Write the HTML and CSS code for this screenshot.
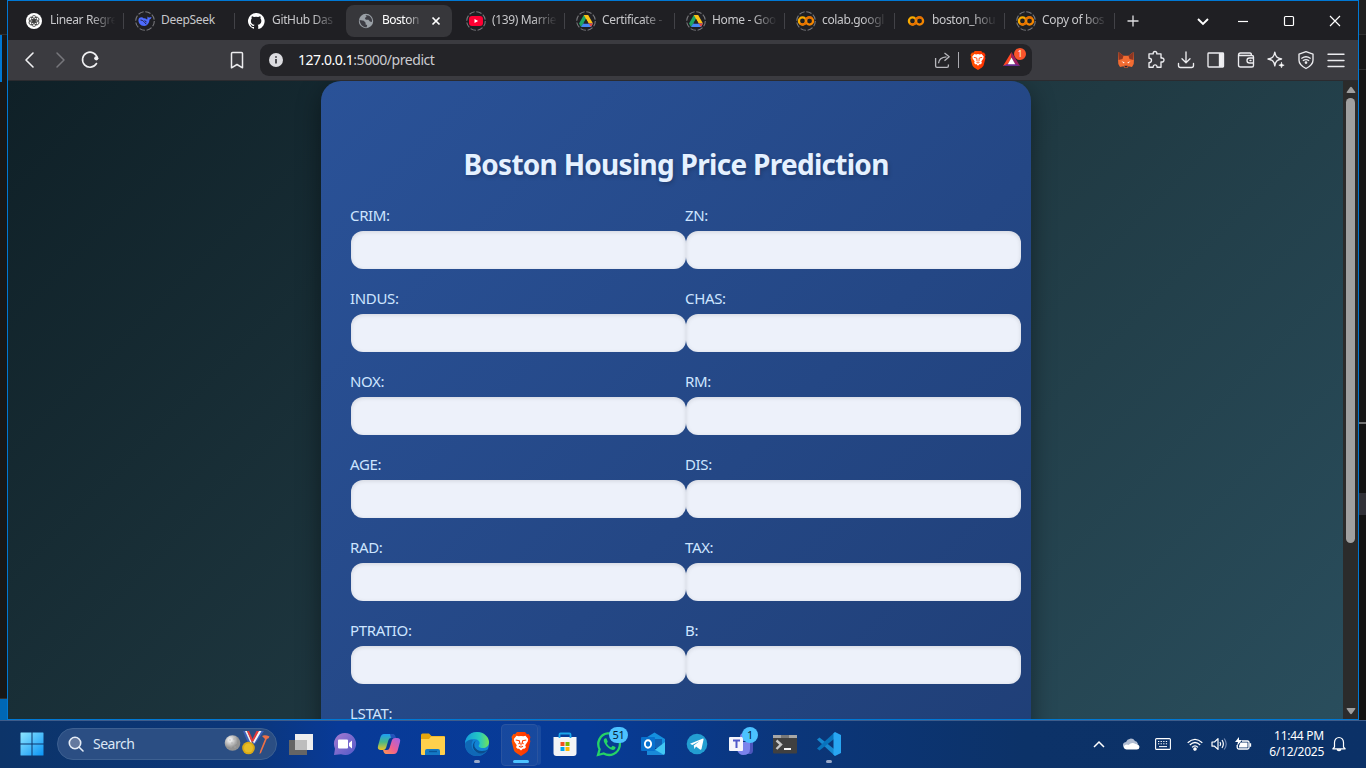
FILE: index.html
```html
<!DOCTYPE html>
<html lang="en">
<head>
<meta charset="utf-8">
<title>Boston Housing Price Prediction</title>
<link rel="stylesheet" href="styles.css">
</head>
<body>
<svg width="0" height="0" class="defs">
  <defs>
    <symbol id="ring" viewBox="0 0 20 20"><circle cx="10" cy="10" r="9.3" fill="none" stroke="#77777b" stroke-width="1.1" stroke-dasharray="5.6 1.7"/></symbol>
    <symbol id="drive" viewBox="0 0 20 20"><path d="M7.8 4h4.4L7 13.2 5 16l-2-3.5z" fill="#1fa463"/><path d="M7.8 4h4.4L17 12.5h-4.4z" fill="#fbc116"/><path d="M5 16l2.2-3.5H17L15 16z" fill="#4688f4"/><path d="M12.6 12.5H17L15 16z" fill="#ea4335"/><path d="M10 8l2.6 4.5H7.4z" fill="#222227"/></symbol>
    <symbol id="colab" viewBox="0 0 20 20"><circle cx="6.5" cy="10" r="3.6" fill="none" stroke="#f9ab00" stroke-width="2.3"/><circle cx="13.5" cy="10" r="3.6" fill="none" stroke="#f28500" stroke-width="2.3"/><path d="M10 8.7A3.6 3.6 0 0 1 16 7.4M10 11.2a3.6 3.6 0 0 1-6 1.2" fill="none" stroke="#e86f00" stroke-width="2.1"/></symbol>
    <linearGradient id="braveFill" x1="0" x2="1"><stop offset="0" stop-color="#ff5500"/><stop offset="1" stop-color="#ff2e00"/></linearGradient>
    <symbol id="brave" viewBox="0 0 20 24"><path d="M6 0h8l2 2.3 1.6-.3L19.5 5l-.7 2.2.6 2-2.2 8.6c-.5 1.5-1 2-2.2 2.9L10 24l-5-3.3c-1.200-.9-1.700-1.400-2.200-2.900L.6 9.200l.6-2L.5 5 2.400 2 4 2.300z" fill="url(#braveFill)"/><path d="M5.500 3.800l2.200.5 2.300-.4 2.300.4 2.200-.5 2.700 3.300-.5 2.500-2.500 3.700.8 2-2 1.700-.8-.6-2.200 2.200-2.200-2.200-.8.6-2-1.700.8-2-2.500-3.700-.5-2.500z" fill="#fff"/><path d="M4.700 8l3.600.8.5 2-1.300 1.200M15.300 8l-3.600.8-.5 2 1.300 1.200M10 11v2.500M8 14.200l2 1 2-1" fill="none" stroke="#ff4000" stroke-width="1.1"/></symbol>
  </defs>
</svg>

<div class="desktop">
  <div class="work">
    <div class="edge-left"><i class="el-a"></i><i class="el-b"></i><i class="el-c"></i><i class="el-d"></i></div>
    <main class="browser">
      <div class="tabs">
        <div class="tab first"><svg class="fav" viewBox="0 0 20 20"><circle cx="10" cy="10" r="8" fill="#fff"/><g fill="none" stroke="#333" stroke-width=".8"><ellipse cx="10" cy="7.700" rx="2.400" ry="3.200"/><ellipse cx="10" cy="7.700" rx="2.400" ry="3.200" transform="rotate(60 10 10)"/><ellipse cx="10" cy="7.700" rx="2.400" ry="3.200" transform="rotate(120 10 10)"/><ellipse cx="10" cy="7.700" rx="2.400" ry="3.200" transform="rotate(180 10 10)"/><ellipse cx="10" cy="7.700" rx="2.400" ry="3.200" transform="rotate(240 10 10)"/><ellipse cx="10" cy="7.700" rx="2.400" ry="3.200" transform="rotate(300 10 10)"/></g></svg><span class="tab-name">Linear Regre</span></div>
        <div class="tab first"><svg class="fav" viewBox="0 0 20 20"><use href="#ring"/><path d="M3.500 8.500C4 6 7 5.500 9 7.500c1.500-.8 2 1 3.200 1 .5-1-.2-2.200.6-3 .4.900 1 1.200 1.600.900.700-.200 1.300-.3 2.100-.4-.2 1.600-1 2.300-2 2.600C14.300 12 12.500 15 9.200 15 5.500 15 3 12 3.500 8.500z" fill="#4d6bfe"/><path d="M5.500 9c2.500-.2 4 2.500 5.800 4.200M9.500 9.700l2 1.200" stroke="#222247" fill="none" stroke-width="1"/></svg><span class="tab-name full">DeepSeek</span></div>
        <div class="tab nosep"><svg class="fav" viewBox="-1 -1 18 18"><path fill="#fff" d="M8 .8a7.300 7.300 0 0 0-2.300 14.200c.4.100.5-.2.500-.4v-1.300c-2 .4-2.500-.9-2.500-.9-.3-.8-.8-1-.8-1-.7-.5.100-.5.100-.5.700.1 1.100.8 1.100.8.700 1.100 1.700.8 2.100.6.100-.5.300-.8.500-1-1.600-.2-3.300-.8-3.300-3.600 0-.8.300-1.500.8-2-.1-.2-.4-.9.100-2 0 0 .6-.2 2 .8a6.900 6.900 0 0 1 3.600 0c1.400-1 2-.8 2-.8.4 1.100.2 1.800.1 2 .5.500.8 1.200.8 2 0 2.800-1.700 3.400-3.300 3.600.3.200.5.700.5 1.400v2c0 .200.100.5.500.4A7.300 7.300 0 0 0 8 .8z"/></svg><span class="tab-name">GitHub Das</span></div>
        <div class="tab nosep active"><div class="pill"><svg class="fav" viewBox="0 0 20 20"><circle cx="10" cy="10" r="7.200" fill="#9aa0a6"/><path d="M9.500 4.200c2 .300 3.500-.2 4.800 1.500 1.500 1.600 2 3.500 1.600 5.300l-2-.4-1.500-1.900H9.800l-1-1.800 1.800-1.200z M3.600 9l4.200.8 1.800 2v1.800l1.600.5-.6 2.400C6.500 16.200 3.800 13 3.600 9z" fill="#3d3d44"/></svg><span class="tab-name">Boston</span><svg class="close" viewBox="0 0 10 10"><path d="M1.500 1.500l7 7M8.500 1.500l-7 7" stroke="#fff" stroke-width="1.700"/></svg></div></div>
        <div class="tab"><svg class="fav" viewBox="0 0 20 20"><use href="#ring"/><rect x="3" y="5" width="14" height="10" rx="3" fill="#ff0033"/><path d="M8.500 7.900v4.200l3.600-2.100z" fill="#fff"/></svg><span class="tab-name">(139) Marrie</span></div>
        <div class="tab"><svg class="fav" viewBox="0 0 20 20"><use href="#ring"/><use href="#drive"/></svg><span class="tab-name">Certificate -</span></div>
        <div class="tab"><svg class="fav" viewBox="0 0 20 20"><use href="#ring"/><use href="#drive"/></svg><span class="tab-name">Home - Goo</span></div>
        <div class="tab"><svg class="fav" viewBox="0 0 20 20"><use href="#ring"/><use href="#colab"/></svg><span class="tab-name">colab.googl</span></div>
        <div class="tab"><svg class="fav" viewBox="0 0 20 20"><use href="#colab"/></svg><span class="tab-name">boston_hou</span></div>
        <div class="tab"><svg class="fav" viewBox="0 0 20 20"><use href="#ring"/><use href="#colab"/></svg><span class="tab-name">Copy of bos</span></div>
        <svg class="newtab" viewBox="0 0 12 12"><path d="M6 .5v11M.5 6h11" stroke="#e0e0e2" stroke-width="1.300"/></svg>
        <svg class="winctl" viewBox="0 0 150 20" fill="none" stroke="#fff" stroke-width="1.200"><path d="M6 8l5 5 5-5" stroke-width="1.900"/><path d="M46 10.500h10"/><rect x="92.500" y="5.500" width="9" height="9" rx="1"/><path d="M138 5l10 10M148 5l-10 10"/></svg>
      </div>
      <div class="toolbar">
        <svg class="nav" viewBox="0 0 80 20" fill="none" stroke-linecap="round" stroke-linejoin="round"><path d="M13 3L6 10l7 7" stroke="#f0f0f2" stroke-width="1.600"/><path d="M37 3l7 7-7 7" stroke="#77777c" stroke-width="1.500"/><path d="M76.500 13.500a7.500 7.500 0 1 1 .9-5.200" stroke="#f0f0f2" stroke-width="1.600"/><circle cx="76.300" cy="8.300" r="2.100" fill="#f0f0f2"/></svg>
        <svg class="bookmark" viewBox="0 0 20 20"><path d="M4.500 3.600c0-.7.400-1.100 1.100-1.100h8.800c.7 0 1.100.4 1.100 1.100v14.200L10 14.500l-5.500 3.300z" fill="none" stroke="#ececee" stroke-width="1.500" stroke-linejoin="round"/></svg>
        <div class="url">
          <svg class="info" viewBox="0 0 14 14"><circle cx="7" cy="7" r="7" fill="#dcdce0"/><path d="M7 6v4.500M7 3.200v1.500" stroke="#35353a" stroke-width="1.700"/></svg>
          <span class="address"><b>127.0.0.1</b>:5000/predict</span>
          <svg class="share" viewBox="0 0 20 20" fill="none" stroke="#b9b9be" stroke-width="1.300" stroke-linejoin="round"><path d="M2.600 8v8q0 1.400 1.400 1.400h10q1.400 0 1.400-1.400v-1.500"/><path d="M5.500 13.300c.3-4 3-6.200 8-6.500M11.500 3l4.700 3.800-4.700 3.900"/></svg>
          <i class="bar"></i>
          <svg class="lion" viewBox="0 0 20 24"><use href="#brave"/></svg>
          <div class="rewards"><svg viewBox="0 0 20 18"><path d="M10 1L1 16l5-1.700L10 7z" fill="#ff4724"/><path d="M10 1l9 15-5-1.700L10 7z" fill="#9e1f63"/><path d="M1 16l5-2.500h8l5 2.500z" fill="#662d91"/><path d="M10 7l4 7H6z" fill="#fff"/></svg><em>1</em></div>
        </div>
        <div class="tools">
          <svg viewBox="0 0 20 20"><path d="M2.500 2l5 3.800h5L17.500 2l.5 7-.3 5-1.700 3-3.500-.8-1 1.600h-3l-1-1.600-3.500.8-1.700-3L2 9z" fill="#f26b31"/><path d="M2.500 2l5 3.800L6.500 9 2.500 10zM17.500 2l-5 3.800 1 3.200 4 1z" fill="#8c3622"/><path d="M5.500 11.300l3 .9-.5 1.300zM14.500 11.300l-3 .9.500 1.300z" fill="#fff"/><path d="M8.200 15.800h3.600l-.8 1.500H9z" fill="#282432"/></svg>
          <svg viewBox="0 0 20 20" class="ln"><path d="M3 3.800h4.300c-.5-2 .7-2.300 1.700-2.300s2.200.3 1.700 2.300H15v4.300c2-.5 3 .5 3 1.900s-1 2.400-3 1.900v5.300h-4c.1-1.700-.8-2.400-1.900-2.400s-2 .7-1.900 2.400H3v-4.500c2 0 2.500-1 2.500-2.400S4.800 8.200 3 8.200z"/></svg>
          <svg viewBox="0 0 20 20" class="ln"><path d="M10 2v10.500M6 8.800l4 4 4-4M2.500 13.500v2q0 2 2 2h11q2 0 2-2v-2"/></svg>
          <svg viewBox="0 0 20 20" class="ln"><rect x="2" y="3" width="15.500" height="14" rx=".8"/><path d="M13.500 3.700v12.600h3.200V3.700z" fill="#f1f1f3"/></svg>
          <svg viewBox="0 0 20 20" class="ln"><path d="M2.500 5.500q0-2.500 2-2.500h9.500q1.500 0 1.500 2.500M2.500 5.500H16q1.500 0 1.500 1.500v8.500q0 1.500-1.500 1.500H4.500q-2 0-2-2zM17.500 8h-4q-2.500 0-2.500 2.500t2.500 2.500h4M14 10.500h1"/></svg>
          <svg viewBox="0 0 20 20" class="ln"><path d="M8.800 2.200c.7 4.500 2.300 6 6.800 6.800-4.500.8-6.100 2.300-6.800 6.800C8.100 11.300 6.500 9.800 2 9c4.500-.8 6.100-2.300 6.800-6.800z"/><path d="M15.500 12.500c.3 1.800.8 2.200 2.700 2.700-1.900.5-2.400.9-2.700 2.700-.3-1.800-.8-2.200-2.700-2.700 1.900-.5 2.400-.9 2.700-2.700z" fill="#fff" stroke-width=".6"/></svg>
          <svg viewBox="0 0 20 20" class="ln"><path d="M10 1.700l7 2.400v6.200c0 3.500-3 6.200-7 8.200-4-2-7-4.700-7-8.200V4.100z"/><path d="M5.800 8.200q4.200-2.800 8.400 0M7.300 10.500q2.700-1.700 5.400 0" /><circle cx="10" cy="12.500" r=".7"/></svg>
          <svg viewBox="0 0 20 20" class="ln"><path d="M2 4.200h16M2 10.500h16M2 16.500h16"/></svg>
        </div>
      </div>
      <div class="view">
        <div class="scene">
          <div class="page">
            <form class="card">
              <h1>Boston Housing Price Prediction</h1>
              <div class="grid">
                <label>CRIM:<input type="text"></label><label>ZN:<input type="text"></label>
                <label>INDUS:<input type="text"></label><label>CHAS:<input type="text"></label>
                <label>NOX:<input type="text"></label><label>RM:<input type="text"></label>
                <label>AGE:<input type="text"></label><label>DIS:<input type="text"></label>
                <label>RAD:<input type="text"></label><label>TAX:<input type="text"></label>
                <label>PTRATIO:<input type="text"></label><label>B:<input type="text"></label>
                <label>LSTAT:<input type="text"></label>
              </div>
            </form>
          </div>
        </div>
        <div class="scroll"><svg viewBox="0 0 10 8"><path d="M4 1.500Q5 .2 6 1.500L9.300 6q.4 1-.6 1H1.300q-1 0-.6-1z"/></svg><i></i><svg class="down" viewBox="0 0 10 8"><path d="M4 6.500Q5 7.800 6 6.500L9.300 2q.4-1-.6-1H1.300q-1 0-.6 1z"/></svg></div>
      </div>
    </main>
    <div class="edge-right"><i class="er-a"></i><i class="er-b"></i><i class="er-c"></i><i class="er-d"></i><i class="er-e"></i><i class="er-f"></i></div>
  </div>

  <footer class="taskbar">
    <svg class="start" viewBox="0 0 24 24"><defs><linearGradient id="win" x1="0" y1="0" x2="1" y2="1" ><stop offset="0" stop-color="#8ee6ff"/><stop offset="1" stop-color="#0a94f5"/></linearGradient></defs><path fill="url(#win)" d="M.5 1q0-.5.5-.5h10.500v11H.5zM12.500.500H23q.5 0 .5.500v10.500h-11zM.5 12.500h11v11H1q-.5 0-.5-.5zM12.500 12.500h11V23q0 .5-.5.5H12.500z"/></svg>
    <div class="search">
      <svg class="mag" viewBox="0 0 16 16" fill="none" stroke="#e6edf7" stroke-width="1.600" stroke-linecap="round"><circle cx="7" cy="7" r="5.700" fill="#64799f"/><path d="M11.200 11.200L15 15"/></svg>
      <span>Search</span>
      <svg class="sports" viewBox="0 0 46 26"><defs><radialGradient id="ball" cx=".35" cy=".3"><stop offset="0" stop-color="#fff"/><stop offset="1" stop-color="#929292"/></radialGradient></defs><circle cx="8.500" cy="13" r="7.800" fill="url(#ball)"/><g fill="#aaa"><circle cx="6" cy="10" r=".7"/><circle cx="10" cy="9" r=".7"/><circle cx="8" cy="13" r=".7"/><circle cx="12" cy="13" r=".7"/><circle cx="7" cy="17" r=".7"/><circle cx="11" cy="17" r=".7"/></g><path d="M19 1h2l6 12h-3z" fill="#3b62bd"/><path d="M21 1h2l5 11-1 2z" fill="#eee"/><path d="M23 1h2l4 9-1 3z" fill="#e53b3b"/><path d="M37 1h3l-9 13h-3z" fill="#3b62bd"/><path d="M34.500 1h3l-7 12-2-1z" fill="#f4f4f4"/><path d="M32.500 1h2.500l-6 11-1-2z" fill="#e53b3b"/><circle cx="24.500" cy="18" r="6.300" fill="#d9a915"/><circle cx="24.500" cy="18" r="4.500" fill="#e7bd27"/><path d="M38 6q3-1.500 7.500.5-.5 2-2.700 2.500L37 23l-1.500 1 .6-3L41 9z" fill="#ed7046"/></svg>
    </div>
    <div class="apps">
      <div class="app"><svg viewBox="0 0 28 28"><path d="M2 10h18v15H2z" fill="#656565"/><path d="M8 4h18v16H8z" fill="#eee"/><path d="M8 10h12v10H8z" fill="#bdbdbd"/></svg></div>
      <div class="app"><svg viewBox="0 0 28 28"><defs><linearGradient id="chat" x1="0" y1="0" x2="1" y2="1"><stop stop-color="#a77bd0"/><stop offset="1" stop-color="#5059c9"/></linearGradient></defs><path d="M14 3a11 11 0 1 1-4 21.200L3 25l1-6.300A11 11 0 0 1 14 3z" fill="url(#chat)"/><path d="M8 9.500q-1 0-1 1v7q0 1 1 1h8q1 0 1-1v-7q0-1-1-1zM18 13l3-2.500v8L18 16z" fill="#fff"/></svg></div>
      <div class="app"><svg viewBox="0 0 28 28"><defs><linearGradient id="cpA" x1="0" y1="0" x2="0" y2="1"><stop stop-color="#1c9ff5"/><stop offset=".5" stop-color="#47b889"/><stop offset="1" stop-color="#f2c324"/></linearGradient><linearGradient id="cpB" x1="1" y1="0" x2="0" y2="1"><stop stop-color="#9b63ef"/><stop offset=".55" stop-color="#f05f92"/><stop offset="1" stop-color="#ff9a4a"/></linearGradient></defs><path d="M9 4h8q2 0 3 4h-4q-2 0-2.500 2L11 18q-.7 2-3 2H6q-4 0-3-4l2.500-9Q6.500 4 9 4z" fill="url(#cpA)"/><path d="M15 4h3q2 0 3 4h-5z" fill="#2453ba"/><path d="M19 24h-8q-2 0-3-4h4q2 0 2.500-2L17 10q.7-2 3-2h2q4 0 3 4l-2.500 9q-1 3-3.500 3z" fill="url(#cpB)"/></svg></div>
      <div class="app"><svg viewBox="0 0 28 28"><path d="M2 5q0-1.500 1.500-1.500H10l2.500 2.500H25q1 0 1 1v5H2z" fill="#e5a50f"/><path d="M2 9h8l2-2.500h13q1 0 1 1V24q0 1-1 1H3q-1 0-1-1z" fill="#ffd04c"/><path d="M6 25v-4q0-2 2-2h11q2 0 2 2v4z" fill="#1479c5"/><path d="M10 21.500h8" stroke="#08549a" stroke-width="1.400"/></svg></div>
      <div class="app run"><svg viewBox="0 0 28 28"><defs><linearGradient id="edA"><stop stop-color="#159bdc"/><stop offset=".6" stop-color="#24c9c2"/><stop offset="1" stop-color="#73e456"/></linearGradient></defs><circle cx="14" cy="14" r="12" fill="#1183d5"/><path d="M2 13C3 5 9 2 14 2c7 0 12 5 12 10 0 4-3 6-6 6-4 0-5-2-4-3 2-3-1-6-5-6-4 0-7 1-9 4z" fill="url(#edA)"/><path d="M10 10c-4 6 1 14 8 13 3-.2 5-1.500 6.500-3C22 24 18 26 14 26 7 26 2 21 2 14c1-3 5-5 8-4z" fill="#1068b6"/><path d="M14 10c-5 3-3 11 5 11 3 0 5-1 6-2-2 4-7 6-11 3.500C8 19 9 12 14 10z" fill="#0b4c8d"/></svg></div>
      <div class="app current"><svg class="brave-large" viewBox="0 0 20 24"><use href="#brave"/></svg></div>
      <div class="app"><svg viewBox="0 0 28 28"><path d="M2.500 7h23v16q0 3-3 3h-17q-3 0-3-3z" fill="#f3f4f6"/><path d="M8.500 8V4.500q0-1 1-1h9q1 0 1 1V8" fill="none" stroke="#1ba6eb" stroke-width="1.800"/><path d="M9.500 12h4v4h-4z" fill="#f25022"/><path d="M14.500 12h4v4h-4z" fill="#7fba00"/><path d="M9.500 17h4v4h-4z" fill="#00a4ef"/><path d="M14.500 17h4v4h-4z" fill="#ffb900"/></svg></div>
      <div class="app"><svg viewBox="0 0 28 28"><path d="M3 25l1.600-5.700A10.800 10.800 0 1 1 8.700 23.500z" fill="#073d91" stroke="#25d366" stroke-width="2.300"/><path d="M10.300 8.300c-2 .8-2 3-.5 5.300 2 3.600 4.600 5.800 8 6.400 2 0 3-1.500 2.700-3l-2.900-1.300-1.500 1.700c-2-.8-3.500-2.200-4.300-4.100l1-1.500-1.300-3.200z" fill="#25d366"/></svg><em class="badge">51</em></div>
      <div class="app"><svg viewBox="0 0 28 28"><path d="M5 9l10.500-6.500L26 9v9H5z" fill="#1590df"/><path d="M9 9h14v9H9z" fill="#1061b5"/><path d="M26 9v14q0 2-2 2H9L26 12z" fill="#42c8f5"/><path d="M8 15l17 10H8z" fill="#1989d9"/><rect x="2" y="7" width="14" height="14" rx="1" fill="#0871ce"/><ellipse cx="9" cy="14" rx="3.100" ry="3.700" fill="none" stroke="#fff" stroke-width="1.900"/></svg></div>
      <div class="app"><svg viewBox="0 0 28 28"><circle cx="14" cy="14" r="10.300" fill="#239ed1"/><path d="M7 13.700L20 8.500q.8 0 .5 1.200L18.500 19q-.5 1-1.500.4L13 16.500 11.500 19l-.8-3.500 6-4.500-7.400 4z" fill="#fff"/></svg></div>
      <div class="app"><svg viewBox="0 0 28 28"><circle cx="24" cy="8" r="3" fill="#5059c9"/><path d="M19 12h7v9q0 2-2 3h-5z" fill="#4c55bc"/><circle cx="17" cy="7" r="4" fill="#7b83eb"/><path d="M10 12h13v7q0 6-7 6-4 0-6-5z" fill="#7b83eb"/><rect x="2" y="7" width="14" height="14" rx="1" fill="#f5f5fb"/><path d="M6 10.500h7M9.500 10.500V18" stroke="#5059c9" stroke-width="2"/></svg><em class="badge single">1</em></div>
      <div class="app"><svg viewBox="0 0 28 28"><rect x="2" y="5" width="24" height="18.500" rx="1" fill="#404040"/><path d="M2 5h24v3H2z" fill="#a7a7a7"/><path d="M10 5h8v3h-8z" fill="#777"/><path d="M5.500 10.500l4.500 4-4.500 4.500" fill="none" stroke="#c7c7c7" stroke-width="2.400"/><path d="M13 19h7" stroke="#fff" stroke-width="1.900"/></svg></div>
      <div class="app run"><svg viewBox="0 0 28 28"><path d="M2 9.500l2.500-2L20 19.700V26z" fill="#1688d0"/><path d="M2 18.500l2.500 2L20 8.300V2z" fill="#0874bd"/><path d="M20 2l6 3v18l-6 3-1.500-1.500V3.500z" fill="#28a6f2"/></svg></div>
    </div>
    <div class="tray">
      <svg class="t-chev" viewBox="0 0 12 8"><path d="M1 7l5-5 5 5" fill="none" stroke="#fff" stroke-width="1.500"/></svg>
      <svg class="t-cloud" viewBox="0 0 18 14"><path d="M1 9a3.500 3.500 0 0 1 3-4 5 5 0 0 1 9-1q2 0 3 3l-9 5H4q-2 0-3-3z" fill="#b1bdd2"/><path d="M3 12q-2.500-2 0-4 2-1 3.500 0Q10 4.500 13.500 7q3.500 0 4 3-.2 2.500-2.700 2.500H4.500z" fill="#fff"/></svg>
      <svg class="t-key" viewBox="0 0 16 12"><rect x=".6" y=".6" width="14.800" height="10.800" rx="1" fill="none" stroke="#fff" stroke-width="1.100"/><path d="M3 3.500h10M3 5.800h10" stroke="#fff" stroke-dasharray="1.300 1.300"/><path d="M4 8.600h8" stroke="#fff"/></svg>
      <svg class="t-wifi" viewBox="0 0 16 13" fill="none" stroke="#fff" stroke-width="1.200"><path d="M.7 4.800q7.300-7 14.600 0M2.800 7q5.200-5 10.400 0M5 9.300q3-3 6 0"/><circle cx="8" cy="11" r="1.200" fill="#fff"/></svg>
      <svg class="t-vol" viewBox="0 0 17 14" fill="none" stroke="#fff" stroke-width="1.200" stroke-linejoin="round"><path d="M1 5h2.500L7 1.600v10.800L3.500 9.200H1zM9 5q1.300 2 0 4M11 3q2.700 4 0 8"/><path d="M13.200 1.500q4 5.500 0 11" stroke="#7389b3"/></svg>
      <svg class="t-bat" viewBox="0 0 17 14"><path d="M2.200 8v2.500q0 1.500 1.500 1.500h8.800q1.500 0 1.500-1.500v-5Q14 4 12.500 4H7M15.500 6.200v3.600" fill="none" stroke="#fff" stroke-width="1.300"/><path d="M5.500 5.500h7v5H4V9zM4 0L0 5h3L2 9l5-6H4z" fill="#fff"/></svg>
      <div class="clock"><span>11:44 PM</span><span>6/12/2025</span></div>
      <svg class="t-bell" viewBox="0 0 14 16" fill="none" stroke="#fff" stroke-width="1.200" stroke-linejoin="round"><path d="M2.500 11V6.500a4.500 5 0 0 1 9 0V11l1.700 1.800H.8zM5 13.500q2 2 4 0"/></svg>
    </div>
  </footer>
</div>
</body>
</html>
```
FILE: styles.css
```css
* { box-sizing: border-box; }
body { margin: 0; font-family: "Noto Sans", "Open Sans", sans-serif; overflow: hidden; }
svg { display: block; flex: none; }
.defs { position: absolute; }
em { font-style: normal; }
.desktop { width: 1366px; height: 768px; display: flex; flex-direction: column; background: #171717; }
.work { height: 720px; display: flex; }

.edge-left, .edge-right { width: 7px; display: flex; flex-direction: column; }
.edge-left i, .edge-right i { display: block; }
.el-a { height: 35px; background: #1b1b1b; border-bottom: 1px solid #303030; }
.el-b { height: 47px; width: 2px; background: #0078d4; }
.el-c { height: 617px; background: #171717; border-bottom: 1px solid #303030; }
.el-d { height: 21px; background: #0067b5; }
.er-a { height: 35px; background: #202020; border-bottom: 1px solid #303030; }
.er-b { height: 35px; background: #181818; border-bottom: 1px solid #303030; }
.er-c { height: 352px; background: #161616; }
.er-d { height: 71px; border-top: 2px solid #727272; background: #131313; }
.er-e { height: 22px; background: #313137; }
.er-f { flex: 1; background: #131313; }

.browser { width: 1352px; border: 1px solid #0078d4; background: #202024; display: flex; flex-direction: column; }
.tabs { height: 39px; padding-left: 5px; display: flex; align-items: center; background: #1f1f23; }
.tab { width: 110px; height: 38px; padding-left: 11px; display: flex; align-items: center; flex: none; font-size: 12px; color: #c7c7ca; background: linear-gradient(#424247, #424247) right center / 1px 16px no-repeat; }
.tab.first { width: 111px; }
.tab.nosep { background: none; }
.fav { width: 20px; height: 20px; }
.tab-name { width: 68px; margin-left: 6px; white-space: nowrap; letter-spacing: -.35px; line-height: 16px; padding-bottom: 1px; mask-image: linear-gradient(90deg, #000 60%, transparent 96%); }
.tab-name.full { mask-image: none; letter-spacing: -.3px; }
.active { padding-left: 1px; }
.pill { width: 106px; height: 32px; padding-left: 10px; display: flex; align-items: center; border-radius: 8px; background: #37373b; color: #fff; }
.pill .tab-name { width: 39px; letter-spacing: -.5px; mask-image: linear-gradient(90deg, #000 60%, transparent 105%); }
.close { width: 10px; height: 10px; margin-left: 10px; }
.newtab { width: 12px; height: 12px; margin-left: 12px; }
.winctl { width: 150px; height: 20px; margin-left: 53px; }

.toolbar { height: 41px; display: flex; align-items: center; background: #3b3b40; border-bottom: 1px solid #2b2b2f; }
.nav { width: 80px; height: 20px; margin-left: 12px; }
.bookmark { width: 20px; height: 20px; margin-left: 127px; }
.url { width: 772px; height: 32px; margin-left: 13px; padding-left: 9px; display: flex; align-items: center; border-radius: 9px; background: #242428; color: #cbcbd0; font-size: 14px; }
.info { width: 14px; height: 14px; }
.address { width: 635px; margin-left: 15px; letter-spacing: -.45px; line-height: 20px; }
.address b { color: #fff; font-weight: 400; }
.share { width: 20px; height: 20px; }
.bar { width: 1px; height: 16px; margin-left: 5px; background: #aaaab0; }
.lion { width: 16px; height: 19px; margin-left: 11px; }
.rewards { width: 20px; height: 20px; margin-left: 16px; position: relative; padding-top: 1px; }
.rewards svg { width: 19px; height: 17px; }
.rewards em { position: absolute; right: -4px; top: -2px; width: 12px; height: 12px; border-radius: 50%; background: #fb542b; color: #fff; font-size: 8px; line-height: 12px; text-align: center; }
.tools { margin-left: 84px; display: flex; gap: 10px; }
.tools svg { width: 20px; height: 20px; }
.ln { fill: none; stroke: #ececef; stroke-width: 1.35; stroke-linecap: round; stroke-linejoin: round; }

.view { height: 638px; display: flex; }
.scene { width: 1335px; overflow: hidden; }
.page { height: 880px; padding-left: 313px; background: linear-gradient(135deg, #0f2027, #203a43, #2c5364); }
.card { width: 710px; height: 880px; padding: 62px 29px 0; border-radius: 20px; background: linear-gradient(135deg, #2a5298, #1e3c72); box-shadow: 0 8px 24px rgba(0, 0, 0, .42); }
h1 { margin: 0; height: 63px; text-align: center; color: #e5f1ff; font: 700 28px/42px "Noto Sans", "Open Sans", sans-serif; letter-spacing: -.72px; text-shadow: 1px 2px 4px rgba(0, 0, 0, .22); white-space: nowrap; }
.grid { width: 671px; display: grid; grid-template-columns: 335px 336px; grid-auto-rows: 83px; }
label { display: block; color: #cde5ff; font-size: 15px; line-height: 19px; letter-spacing: -.35px; }
input { display: block; width: 335px; height: 38px; margin: 6px 0 0 1px; border: 0; border-radius: 12px; background: #edf1fa; box-shadow: inset 0 1px 4px rgba(0, 0, 0, .12); }
.scroll { width: 15px; display: flex; flex-direction: column; align-items: center; background: #2b2b2b; padding: 5px 0 4px; fill: #9f9f9f; }
.scroll svg { width: 10px; height: 8px; }
.scroll i { width: 9px; height: 445px; margin-top: 4px; border-radius: 5px; background: #a0a0a0; }
.scroll .down { margin-top: auto; }

.taskbar { height: 48px; padding-bottom: 1px; border-top: 1px solid #3d5c8b; display: flex; align-items: center; color: #fff; background: linear-gradient(90deg, #0c3469 0, #0b367a 18%, #083a98 25%, #073b97 43%, #0b367a 58%, #0c3268 75%, #0b3167); }
.start { width: 24px; height: 24px; margin-left: 20px; }
.search { width: 220px; height: 32px; margin-left: 13px; padding-left: 10px; display: flex; align-items: center; border: 1px solid #3d6091; border-radius: 16px; background: #2b4e83; font-size: 14px; color: #dce7f6; }
.mag { width: 16px; height: 16px; }
.search span { width: 120px; margin-left: 9px; letter-spacing: -.5px; line-height: 20px; }
.sports { width: 46px; height: 26px; margin-left: 11px; margin-bottom: 2px; }
.apps { display: flex; margin-left: 2px; }
.app { width: 44px; height: 46px; position: relative; display: flex; align-items: center; justify-content: center; }
.app > svg { width: 28px; height: 28px; }
.app > .brave-large { width: 20px; height: 24px; }
.run::after, .current::after { content: ""; position: absolute; left: 19px; bottom: 4px; width: 6px; height: 3px; border-radius: 2px; background: #98a9ca; }
.current::before { content: ""; position: absolute; left: 2px; top: 3px; width: 35px; height: 40px; border: 1px solid #2a54a0; border-radius: 4px; background: rgba(90, 130, 190, .2); box-shadow: 4px 0 0 -1px rgba(90, 130, 190, .22); }
.current svg { position: relative; }
.current::after { left: 14px; width: 16px; background: #4cc2ff; }
.badge { position: absolute; left: 22px; top: 6px; width: 19px; height: 16px; border-radius: 8px; background: #4cc2ff; color: #061b35; font-size: 11px; line-height: 16px; text-align: center; letter-spacing: -.4px; }
.badge.single { left: 23px; width: 16px; }
.tray { margin-left: 242px; display: flex; align-items: center; }
.t-chev { width: 12px; height: 8px; }
.t-cloud { width: 18px; height: 14px; margin-left: 17px; }
.t-key { width: 16px; height: 12px; margin-left: 15px; }
.t-wifi { width: 16px; height: 13px; margin-left: 16px; }
.t-vol { width: 17px; height: 14px; margin-left: 8px; }
.t-bat { width: 17px; height: 14px; margin-left: 7px; }
.clock { width: 71px; margin-left: 1px; display: flex; flex-direction: column; align-items: flex-end; font-size: 12px; line-height: 16px; letter-spacing: -.25px; white-space: nowrap; }
.t-bell { width: 14px; height: 16px; margin-left: 8px; }
```
